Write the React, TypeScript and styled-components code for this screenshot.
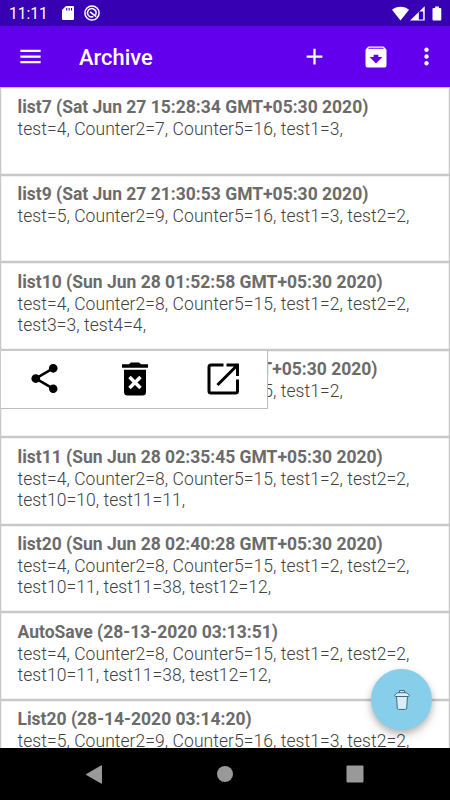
import React from "react";
import styled, { createGlobalStyle } from "styled-components";

const GlobalStyle = createGlobalStyle`
  * { box-sizing: border-box; }
  body { margin: 0; background: #fff; font-family: Roboto, sans-serif; overflow: hidden; }
  svg { display: block; flex: none; }
`;

const Screen = styled.div`
  position: relative;
  width: 450px;
  height: 800px;
  display: flex;
  flex-direction: column;
  overflow: hidden;
  background: #fff;
`;

const StatusBar = styled.div`
  flex: none;
  height: 26px;
  padding: 0 8px 0 9px;
  display: flex;
  align-items: center;
  justify-content: space-between;
  background: #3700b3;
  color: #fff;
`;

const StatusGroup = styled.div<{ $gap: number }>`
  display: flex;
  align-items: center;
  gap: ${(p) => p.$gap}px;
`;

const Clock = styled.span`
  width: 42px;
  margin-top: 2px;
  font-size: 15.6px;
  line-height: 20px;
  white-space: nowrap;
`;

const AppBar = styled.header`
  flex: none;
  height: 61px;
  padding: 0 10px 0 17px;
  display: flex;
  align-items: center;
  background: #6200ee;
  color: #fff;
`;

const BarTitle = styled.h1`
  margin: 3px 0 0 35px;
  flex: 1;
  font-size: 21.9px;
  line-height: 28px;
  font-weight: 500;
`;

const IconButton = styled.button<{ $left?: number }>`
  margin: 0 0 0 ${(p) => p.$left ?? 0}px;
  padding: 0;
  border: 0;
  background: none;
  color: inherit;
`;

const List = styled.main`
  flex: 1;
  min-height: 0;
  overflow: hidden;
  padding-top: 0.3px;
`;

const Row = styled.article`
  position: relative;
  height: 87.5px;
  padding: 8.5px 17.5px 0 16.5px;
  border: 1px solid #c8c8c8;
  box-shadow: inset 0 0 0 0.25px #c8c8c8;
`;

const RowTitle = styled.h2`
  margin: 0;
  font-size: 17.5px;
  line-height: 21.5px;
  font-weight: 700;
  color: #6b6b6b;
  white-space: nowrap;
`;

const RowText = styled.p`
  margin: 0.5px -10px 0 0;
  font-size: 17.5px;
  line-height: 21px;
  font-weight: 300;
  letter-spacing: 0.06px;
  color: #414141;
`;

const ActionPanel = styled.div`
  position: absolute;
  left: 0;
  top: 0;
  width: 267px;
  height: 58px;
  padding: 0 28px 1px 26px;
  display: flex;
  align-items: center;
  justify-content: space-between;
  background: #fff;
  border-right: 1px solid #bdbdbd;
  border-bottom: 1px solid #bdbdbd;
`;

const Fab = styled.button`
  position: absolute;
  left: 371px;
  top: 669px;
  width: 61px;
  height: 61px;
  padding: 0;
  border: 0;
  border-radius: 50%;
  display: flex;
  align-items: center;
  justify-content: center;
  background: #87ceeb;
  box-shadow: 0 3px 6px rgba(0, 0, 0, 0.22), 0 6px 12px rgba(0, 0, 0, 0.12);
`;

const NavBar = styled.nav`
  flex: none;
  height: 52px;
  padding: 0 86px 0 86px;
  display: flex;
  align-items: center;
  justify-content: space-between;
  background: #000;
`;

const rows = [
  { title: "list7 (Sat Jun 27 15:28:34 GMT+05:30 2020)", text: "test=4, Counter2=7, Counter5=16, test1=3," },
  { title: "list9 (Sat Jun 27 21:30:53 GMT+05:30 2020)", text: "test=5, Counter2=9, Counter5=16, test1=3, test2=2," },
  { title: "list10 (Sun Jun 28 01:52:58 GMT+05:30 2020)", text: "test=4, Counter2=8, Counter5=15, test1=2, test2=2, test3=3, test4=4," },
  { title: "List3 (Sun Jun 28 02:30:12 GMT+05:30 2020)", text: "test=4, Counter2=8, Counter5=15, test1=2,", open: true },
  { title: "list11 (Sun Jun 28 02:35:45 GMT+05:30 2020)", text: "test=4, Counter2=8, Counter5=15, test1=2, test2=2, test10=10, test11=11," },
  { title: "list20 (Sun Jun 28 02:40:28 GMT+05:30 2020)", text: "test=4, Counter2=8, Counter5=15, test1=2, test2=2, test10=11, test11=38, test12=12," },
  { title: "AutoSave (28-13-2020 03:13:51)", text: "test=4, Counter2=8, Counter5=15, test1=2, test2=2, test10=11, test11=38, test12=12," },
  { title: "List20 (28-14-2020 03:14:20)", text: "test=5, Counter2=9, Counter5=16, test1=3, test2=2," },
];

const Icon = ({ size, d }: { size: number; d: string }) => (
  <svg width={size} height={size} viewBox="0 0 24 24" fill="currentColor">
    <path fillRule="evenodd" d={d} />
  </svg>
);

const MENU = "M3 18h18v-2H3v2zm0-5h18v-2H3v2zm0-7v2h18V6H3z";
const ADD = "M19 13h-6v6h-2v-6H5v-2h6V5h2v6h6v2z";
const ARCHIVE =
  "M20.54 5.23l-1.39-1.68C18.88 3.21 18.47 3 18 3H6c-.47 0-.88.21-1.16.55L3.46 5.23C3.17 5.57 3 6.02 3 6.5V19c0 1.1.9 2 2 2h14c1.1 0 2-.9 2-2V6.5c0-.48-.17-.93-.46-1.27zM12 17.5L6.5 12H10v-2h4v2h3.5L12 17.5zM5.12 5l.81-1h12l.94 1H5.12z";
const MORE =
  "M12 8c1.1 0 2-.9 2-2s-.9-2-2-2-2 .9-2 2 .9 2 2 2zm0 2c-1.1 0-2 .9-2 2s.9 2 2 2 2-.9 2-2-.9-2-2-2zm0 6c-1.1 0-2 .9-2 2s.9 2 2 2 2-.9 2-2-.9-2-2-2z";
const SHARE =
  "M18 16.08c-.76 0-1.44.3-1.96.77L8.91 12.7c.05-.23.09-.46.09-.7s-.04-.47-.09-.7l7.05-4.11c.54.5 1.25.81 2.04.81 1.66 0 3-1.34 3-3s-1.34-3-3-3-3 1.34-3 3c0 .24.04.47.09.7L8.04 9.81C7.5 9.31 6.79 9 6 9c-1.66 0-3 1.34-3 3s1.34 3 3 3c.79 0 1.5-.31 2.04-.81l7.12 4.16c-.05.21-.08.43-.08.65 0 1.61 1.31 2.92 2.92 2.92s2.92-1.31 2.92-2.92-1.31-2.92-2.92-2.92z";

export default function App() {
  return (
    <>
      <GlobalStyle />
      <Screen>
        <StatusBar>
          <StatusGroup $gap={10.5}>
            <Clock>11:11</Clock>
            <svg width="12" height="14" viewBox="0 0 12 14">
              <path fill="#fff" fillRule="evenodd" d="M4 0h7a1 1 0 0 1 1 1v12a1 1 0 0 1-1 1H1a1 1 0 0 1-1-1V4zM4.2 2v2.4h1.1V2zM6.6 2v2.4h1.1V2zM9 2v2.4h1.1V2z" />
            </svg>
            <svg width="16" height="16" viewBox="0 0 16 16" fill="none" stroke="#fff">
              <circle cx="8" cy="8" r="7.1" strokeWidth="1.5" />
              <path d="M4.7 10.7A4.2 4.2 0 1 1 11.5 9.800" strokeWidth="1.5" />
              <path d="M6 6.8l6.3 4.900M4.700 10.700c1.300 1.300 3 1.600 4.700.9" strokeWidth="1.6" />
            </svg>
          </StatusGroup>
          <StatusGroup $gap={1}>
            <svg width="17" height="15" viewBox="0 0 17 15" fill="#fff">
              <path d="M0 3.8C4.6-.3 12.4-.3 17 3.8L8.5 14.5z" />
            </svg>
            <svg width="15" height="15" viewBox="0 0 15 15">
              <path fill="#fff" fillRule="evenodd" d="M14.7.2v14.3H0zM13.200 5.400H8.800v8h4.400z" />
            </svg>
            <svg width="16" height="15" viewBox="0 0 16 15" fill="#fff">
              <path d="M9.200.5h3.700v1.400h1.400a1 1 0 0 1 1 1v10.600a1 1 0 0 1-1 1H7.500a1 1 0 0 1-1-1V2.900a1 1 0 0 1 1-1h1.700z" />
            </svg>
          </StatusGroup>
        </StatusBar>

        <AppBar>
          <IconButton aria-label="Menu"><Icon size={27} d={MENU} /></IconButton>
          <BarTitle>Archive</BarTitle>
          <IconButton aria-label="Add"><Icon size={27} d={ADD} /></IconButton>
          <IconButton aria-label="Archive list" $left={34}><Icon size={28} d={ARCHIVE} /></IconButton>
          <IconButton aria-label="More" $left={23}><Icon size={27} d={MORE} /></IconButton>
        </AppBar>

        <List>
          {rows.map((row) => (
            <Row key={row.title}>
              <RowTitle>{row.title}</RowTitle>
              <RowText>{row.text}</RowText>
              {row.open && (
                <ActionPanel>
                  <IconButton aria-label="Share"><Icon size={35} d={SHARE} /></IconButton>
                  <IconButton aria-label="Delete">
                    <svg width="26" height="34" viewBox="0 0 26 34">
                      <path d="M0 2.3h7L8.8.5h8.400l1.800 1.800h7v3.400H0zM2 7.800h22v22.100a3.500 3.500 0 0 1-3.500 3.500h-15A3.500 3.500 0 0 1 2 29.900z" />
                      <path d="M7.500 15l11 11M18.500 15l-11 11" stroke="#fff" strokeWidth="3.5" />
                    </svg>
                  </IconButton>
                  <IconButton aria-label="Open">
                    <svg width="32" height="32" viewBox="0 0 32 32" fill="none" stroke="#000" strokeWidth="3">
                      <path d="M16.500 2H4a2 2 0 0 0-2 2v24a2 2 0 0 0 2 2h24.500a2 2 0 0 0 2-2V16.500M19.500 2h11v11M30 2.500L10.500 22" />
                    </svg>
                  </IconButton>
                </ActionPanel>
              )}
            </Row>
          ))}
        </List>

        <NavBar>
          <svg width="17" height="19" viewBox="0 0 17 19" fill="#999">
            <path d="M16 1v17a.6.6 0 0 1-1 .5L.3 10a.6.6 0 0 1 0-1L15 .5a.6.6 0 0 1 1 .5z" />
          </svg>
          <svg width="16" height="16" viewBox="0 0 16 16" fill="#999"><circle cx="8" cy="8" r="8" /></svg>
          <svg width="18" height="18" viewBox="0 0 18 18" fill="#999"><rect x=".5" y=".5" width="17" height="17" rx="1" /></svg>
        </NavBar>

        <Fab aria-label="Empty archive">
          <svg width="16" height="22" viewBox="0 0 16 22" fill="#d8effa" stroke="#456b7a" strokeWidth="1">
            <path d="M5.5 4V1.500h5V4" />
            <path d="M2.500 7l.8 12.200a1.300 1.300 0 0 0 1.300 1.200h6.800a1.300 1.300 0 0 0 1.300-1.200L13.500 7z" />
            <path d="M1.500 7.500C.5 7.500.5 6.500 1 6c1-1.500 2.200-2.300 4-2.300h6c1.800 0 3 .8 4 2.300.5.5.5 1.500-.5 1.500z" />
          </svg>
        </Fab>
      </Screen>
    </>
  );
}
